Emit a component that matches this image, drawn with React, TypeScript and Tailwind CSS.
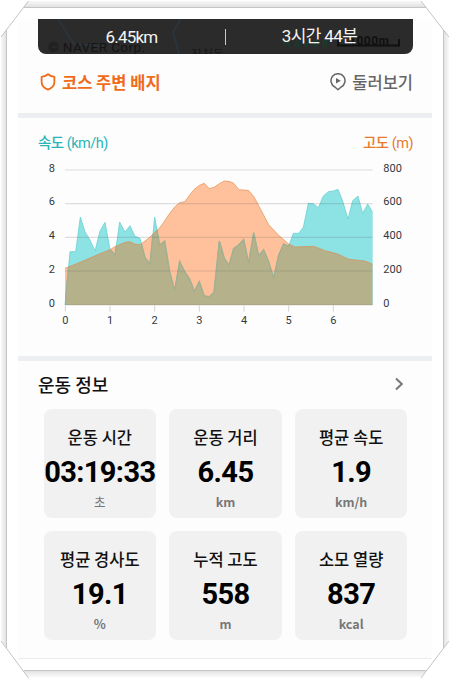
import React from "react";

const speed =
  "105,540 120,380 137,380 151,276 165,320 180,345 195,378 210,318 225,292 240,373 255,390 269,291 285,321 300,302 315,334 330,340 345,398 360,416 374,276 389,360 404,348 419,440 434,496 449,409 464,440 479,462 493,499 508,470 523,513 538,515 552,502 568,348 583,400 597,421 611,370 626,360 641,343 656,414 671,323 686,392 701,374 716,410 731,459 746,390 761,357 776,364 790,325 806,325 820,307 835,235 850,236 865,248 880,213 895,200 910,198 924,193 938,228 954,282 968,227 984,213 998,265 1013,237 1028,262";
const altitude =
  "105,430 150,412 210,386 240,374 255,365 285,352 300,350 316,358 330,359 345,348 360,336 374,322 389,309 404,288 419,265 434,246 449,233 464,230 479,210 493,193 508,181 523,175 538,191 552,187 568,176 583,168 597,169 610,174 627,194 655,196 671,214 686,242 716,299 746,331 776,357 795,366 815,365 850,364 865,369 885,377 905,382 925,388 955,402 975,405 1000,407 1013,411 1028,418";

const grid = [135, 236, 337, 438, 540];
const leftLabels = ["8", "6", "4", "2", "0"];
const rightLabels = ["800", "600", "400", "200", "0"];

function Chart() {
  return (
    <svg className="block h-[170px] w-[375px]" viewBox="24 105 1125 510" fontFamily='Roboto, "Noto Sans", sans-serif' fontSize="33" fill="#333a40">
      <defs>
        <clipPath id="under-altitude">
          <polygon points={`${altitude} 1028,540 105,540`} />
        </clipPath>
      </defs>
      <polygon points={`${altitude} 1028,540 105,540`} fill="#fec19b" />
      <polygon points={`${speed} 1028,540`} fill="#8de2e4" />
      <polyline points={speed} fill="none" stroke="#5fcdd0" strokeOpacity="0.7" strokeWidth="3" />
      <g clipPath="url(#under-altitude)">
        <polygon points={`${speed} 1028,540`} fill="#b4b18b" />
        <polyline points={speed} fill="none" stroke="#a3af8e" strokeWidth="4" />
      </g>
      <polyline points={altitude} fill="none" stroke="#e08a4c" strokeOpacity="0.65" strokeWidth="3" />
      {grid.map((y) => (
        <line key={y} x1="105" x2="1028" y1={y} y2={y} stroke="#555" strokeOpacity="0.18" strokeWidth="3.5" />
      ))}
      {[0, 1, 2, 3, 4, 5, 6].map((n) => (
        <g key={n}>
          <line x1={106 + n * 134} x2={106 + n * 134} y1="541" y2="560" stroke="#d4d4d4" strokeWidth="3" />
          <text x={106 + n * 134} y="596" textAnchor="middle">{n}</text>
        </g>
      ))}
      {grid.map((y, i) => (
        <g key={y}>
          <text x="75" y={y + 5} textAnchor="end">{leftLabels[i]}</text>
          <text x="1060" y={y + 5}>{rightLabels[i]}</text>
        </g>
      ))}
    </svg>
  );
}

function Frame() {
  return (
    <svg className="pointer-events-none absolute inset-0" width="450" height="678" viewBox="0 0 450 678">
      <defs>
        <linearGradient id="l"><stop offset="0" stopColor="#f8f8f8" /><stop offset="1" stopColor="#dedede" /></linearGradient>
        <linearGradient id="r"><stop offset="0" stopColor="#dedede" /><stop offset="1" stopColor="#fafafa" /></linearGradient>
        <linearGradient id="t" x2="0" y2="1"><stop offset="0" stopColor="#f8f8f8" /><stop offset="1" stopColor="#dedede" /></linearGradient>
        <linearGradient id="b" x2="0" y2="1"><stop offset="0" stopColor="#dedede" /><stop offset="1" stopColor="#fafafa" /></linearGradient>
      </defs>
      <polygon points="1,37 7,29 7,649 1,641" fill="url(#l)" />
      <polygon points="443,29 449,37 449,641 443,649" fill="url(#r)" />
      <polygon points="28,1 421,1 427,8 23,8" fill="url(#t)" />
      <polygon points="23,670 427,670 421,677 28,677" fill="url(#b)" />
      <path d="M6.5 30V648M443.5 30V648M24 7.5H426M24 670.5H426" stroke="#c6c6c6" fill="none" />
      <path d="M1 37L28.5 1M421 1L449 37M1 641L28.5 678M421 678L449 641" stroke="#c4c4c4" fill="none" />
    </svg>
  );
}

const stats = [
  ["운동 시간", "03:19:33", "초"],
  ["운동 거리", "6.45", "km"],
  ["평균 속도", "1.9", "km/h"],
  ["평균 경사도", "19.1", "%"],
  ["누적 고도", "558", "m"],
  ["소모 열량", "837", "kcal"],
];

export default function App() {
  return (
    <div className="relative h-[678px] w-[450px] overflow-hidden bg-white pl-[18px] pt-[19px] font-['Noto_Sans_CJK_KR',sans-serif]">
      <main className="h-[640px] w-[414px] border-b border-[#ececec] bg-[#fdfdfd]">
        <div className="relative mx-5 flex h-[35px] w-[375px] items-center overflow-hidden rounded-b-lg bg-[#2b2b2b] font-[Roboto,'Noto_Sans_CJK_KR',sans-serif]">
          <svg className="absolute inset-0" width="375" height="35" fill="none">
            <path d="M20 0L29 14L36 25L66 27M143 0L135 13L141 35" stroke="#2c343b" strokeWidth="2" />
            <text x="10" y="33" fill="#151515" fontFamily="Roboto, sans-serif" fontSize="13.5" textLength="97">© NAVER Corp.</text>
            <text x="153" y="40" fill="#191919" fontSize="12">장천동</text>
            <text x="246" y="28" fill="#173c2d" fontFamily="Roboto, sans-serif" fontWeight="900" fontSize="9" textLength="44">NAVER</text>
            <text x="311" y="26" fill="#101010" fontFamily="Roboto, sans-serif" fontWeight="700" fontSize="12" textLength="40">1000m</text>
            <path d="M300 20V26.5H361V20" stroke="#101010" strokeWidth="2" />
          </svg>
          <span className="relative w-[187px] pt-px text-center text-[17px] leading-none tracking-[-0.8px] text-[#f5f5f5]">6.45km</span>
          <span className="relative h-4 w-px bg-[#c8c8c8]" />
          <span className="relative flex-1 text-center text-[17px] leading-none tracking-[-0.6px] text-[#f5f5f5]">3시간 44분</span>
        </div>

        <div className="mx-5 flex h-[59px] w-[375px] items-center justify-between pb-[3px] text-[16.5px]">
          <div className="flex items-center gap-[6px] font-bold text-[#ef6c1a]">
            <svg className="ml-[2px]" width="16" height="18" viewBox="0 0 16 18" fill="none" stroke="currentColor" strokeWidth="1.8" strokeLinejoin="round">
              <path d="M8 1.2C6.2 2.7 4 3.4 1.6 3.9V8.7C1.6 12.3 4 15 8 16.7C12 15 14.4 12.3 14.4 8.7V3.9C12 3.4 9.8 2.7 8 1.2Z" />
            </svg>
            <span>코스 주변 배지</span>
          </div>
          <div className="flex items-center gap-[6px] font-medium text-[#666]">
            <svg width="16" height="18" viewBox="0 0 16 18" fill="none" stroke="currentColor" strokeWidth="1.5" strokeLinejoin="round">
              <path d="M8 16.8L4.9 14A7 7 0 1 1 11.1 14Z" />
              <path d="M6 5L10.8 7.8L6 10.6Z" fill="currentColor" stroke="none" />
            </svg>
            <span>둘러보기</span>
          </div>
        </div>

        <div className="h-[5px] bg-[#eceef1]" />

        <section className="h-[238px] px-5 pt-[16px] font-[Roboto,'Noto_Sans_CJK_KR',sans-serif]">
          <div className="flex h-5 w-[375px] items-center justify-between text-[14.5px] font-medium tracking-[-0.5px]">
            <span className="text-[#27b5b9]">속도 <span className="font-normal">(km/h)</span></span>
            <span className="text-[#e97a2c]">고도 <span className="font-normal">(m)</span></span>
          </div>
          <div className="mt-[6px]"><Chart /></div>
        </section>

        <div className="h-[5px] bg-[#eceef1]" />

        <div className="mx-5 flex h-[48px] items-center justify-between pb-[2px]">
          <h2 className="text-[18px] font-medium text-[#111]">운동 정보</h2>
          <svg className="mr-[7px]" width="12" height="14" viewBox="0 0 12 14" fill="none" stroke="#777" strokeWidth="2">
            <path d="M3 1.5L8.8 7L3 12.5" />
          </svg>
        </div>

        <div className="ml-[25.5px] grid w-[364px] grid-cols-3 gap-[13px]">
          {stats.map(([label, value, unit]) => (
            <div key={label} className="flex h-[109px] min-w-0 flex-col items-center rounded-lg bg-[#f1f1f1] pt-[17px]">
              <span className="text-[16.5px] font-medium leading-[22px] text-[#111]">{label}</span>
              <span className="mt-[6px] whitespace-nowrap font-[Roboto,sans-serif] text-[29px] font-bold leading-[36px] tracking-[-0.6px] text-black">{value}</span>
              <span className={`mt-[4px] text-[12.5px] leading-4 text-[#777] ${unit === "초" ? "font-normal" : "font-bold"}`}>{unit}</span>
            </div>
          ))}
        </div>
      </main>
      <Frame />
    </div>
  );
}
